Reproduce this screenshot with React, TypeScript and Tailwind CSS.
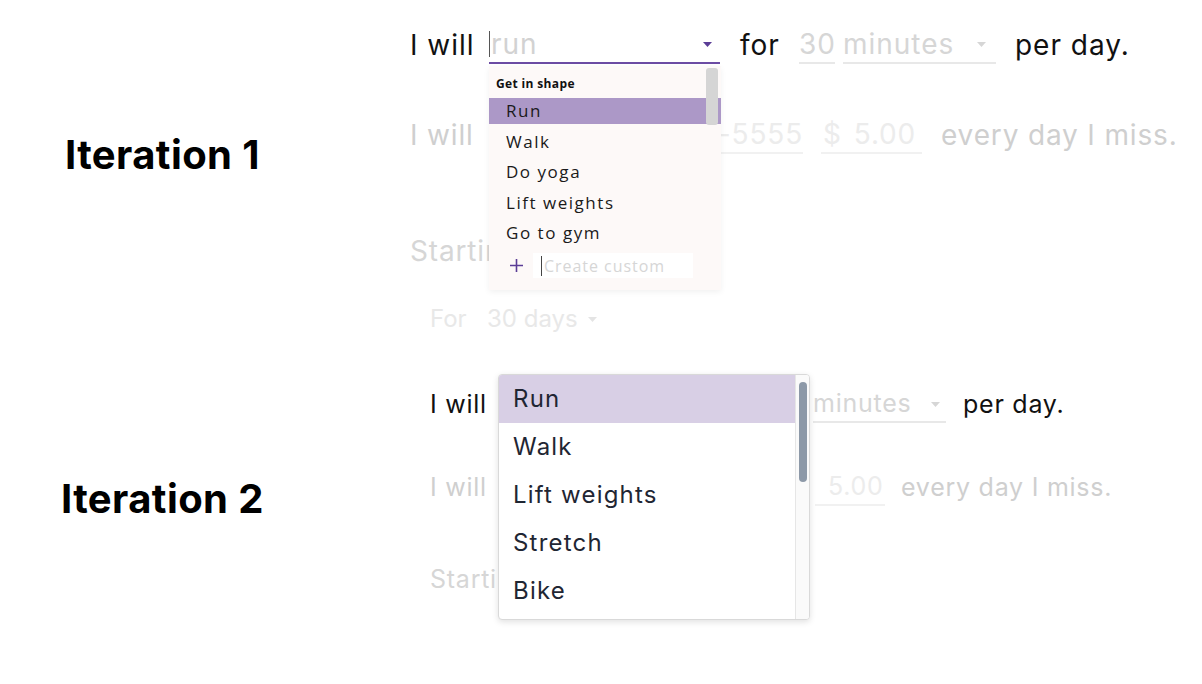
import React from "react";

const sentence = "font-['Inter',sans-serif]";

function Caret({ color, className = "" }: { color: string; className?: string }) {
  return (
    <svg width="9" height="5" viewBox="0 0 9 5" className={className}>
      <path d="M0 0 L9 0 L4.5 5 Z" fill={color} />
    </svg>
  );
}

function Iteration1() {
  const items = ["Run", "Walk", "Do yoga", "Lift weights", "Go to gym"];
  return (
    <section className="flex h-[355px]">
      <div className="w-[410px] pl-[65px] pt-[131px]">
        <h2 className="font-['Inter',sans-serif] font-bold text-[40px] leading-[48px] tracking-[0.01em] text-black">
          Iteration 1
        </h2>
      </div>

      <div className={`relative flex-1 ${sentence}`}>
        {/* sentence 1 */}
        <div className="mt-[26px] flex items-center h-[38px] text-[28px] text-[#111] tracking-[0.035em]">
          <span className="w-[79px]">I will</span>
          <div className="w-[231px] h-full flex items-center border-b-2 border-[#6c4ca4]">
            <span className="w-px h-[26px] bg-[#555] mr-px" />
            <span className="flex-1 text-[#d2d2d2]">run</span>
            <Caret color="#5b3d96" className="mr-[8px]" />
          </div>
          <span className="ml-[20px] w-[59px]">for</span>
          <div className="w-[36px] h-full flex items-center border-b-2 border-[#e8e8e8] text-[#d6d6d6]">
            30
          </div>
          <div className="ml-[8px] w-[153px] h-full flex items-center border-b-2 border-[#e8e8e8] text-[#d6d6d6]">
            <span className="flex-1">minutes</span>
            <Caret color="#d6d6d6" className="mr-[10px]" />
          </div>
          <span className="ml-[19px]">per day.</span>
        </div>

        {/* sentence 2 (faded) */}
        <div className="mt-[52px] flex items-center h-[38px] text-[28px] text-[#cfcfcf] tracking-[0.03em]">
          <span className="w-[79px]">I will</span>
          <div className="w-[314px] h-full flex items-center justify-end border-b-2 border-[#f1f1f1] text-[#ececec]">
            (555) 555-5555
          </div>
          <div className="ml-[18px] w-[101px] h-full flex items-center border-b-2 border-[#f1f1f1] text-[#ececec]">
            <span className="ml-[2px]">$</span>
            <span className="ml-[12px]">5.00</span>
          </div>
          <span className="ml-[19px]">every day I miss.</span>
        </div>

        {/* sentence 3 */}
        <div className="mt-[78px] flex items-center h-[38px] text-[28px] text-[#d6d6d6] tracking-[0.03em]">
          <span>Starting</span>
        </div>

        {/* sentence 4 */}
        <div className="mt-[32px] pl-[20px] flex items-center h-[34px] text-[24px] text-[#e8e8e8]">
          <span className="w-[57px]">For</span>
          <span>30 days</span>
          <Caret color="#e4e4e4" className="ml-[10px]" />
        </div>

        {/* open dropdown */}
        <div className="absolute left-[79px] top-[66px] w-[232px] h-[224px] bg-[#fdf9f8] shadow-[0_2px_6px_rgba(0,0,0,0.06)] font-['Open_Sans',sans-serif]">
          <div className="absolute right-[3px] top-[2px] w-[12px] h-[57px] rounded-[3px] bg-[#d5d5d5]" />
          <div className="pl-[7px] pt-[9px] h-[32px] text-[12px] font-bold tracking-[0.03em] text-[#111]">Get in shape</div>
          <ul className="flex flex-col gap-[4.5px]">
            {items.map((it, i) => (
              <li
                key={it}
                className={`h-[26px] pl-[17px] flex items-center text-[17px] tracking-[0.09em] text-[#1a1a1a] ${
                  i === 0 ? "bg-[#ac98c7]" : ""
                }`}
              >
                {it}
              </li>
            ))}
          </ul>
          <div className="mt-[7px] flex items-center h-[25px]">
            <div className="w-[44px] pl-[21px] flex items-center">
              <svg width="13" height="13" viewBox="0 0 13 13">
                <path d="M6.5 0 V13 M0 6.5 H13" stroke="#5b3d96" strokeWidth="1.6" />
              </svg>
            </div>
            <div className="w-[160px] h-[25px] bg-white flex items-center">
              <span className="ml-[8px] w-px h-[20px] bg-[#444]" />
              <span className="ml-[2px] text-[16px] tracking-[0.06em] text-[#d6d6d6]">Create custom</span>
            </div>
          </div>
        </div>
      </div>
    </section>
  );
}

function Iteration2() {
  const items = ["Run", "Walk", "Lift weights", "Stretch", "Bike"];
  return (
    <section className="flex h-[329px]">
      <div className="w-[430px] pl-[61px] pt-[120px]">
        <h2 className="font-['Inter',sans-serif] font-bold text-[40px] leading-[48px] tracking-[0.01em] text-black">
          Iteration 2
        </h2>
      </div>

      <div className={`relative flex-1 ${sentence}`}>
        <div className="mt-[32px] flex items-center h-[36px] text-[25px] text-[#111] tracking-[0.03em]">
          <span className="w-[68px]">I will</span>
          <div className="w-[315px] h-full" />
          <div className="w-[133px] h-full flex items-center border-b-2 border-[#e8e8e8] text-[#d6d6d6]">
            <span className="flex-1">minutes</span>
            <Caret color="#d6d6d6" className="mr-[6px]" />
          </div>
          <span className="ml-[17px]">per day.</span>
        </div>

        <div className="mt-[47px] flex items-center h-[36px] text-[25px] text-[#cfcfcf] tracking-[0.03em]">
          <span className="w-[68px]">I will</span>
          <div className="w-[317px] h-full" />
          <div className="w-[70px] h-full flex items-center border-b-2 border-[#f1f1f1] text-[#ececec]">
            <span className="ml-[13px]">5.00</span>
          </div>
          <span className="ml-[16px]">every day I miss.</span>
        </div>

        <div className="mt-[56px] flex items-center h-[36px] text-[25px] text-[#d6d6d6] tracking-[0.03em]">
          <span>Starting</span>
        </div>

        {/* open dropdown */}
        <div className="absolute left-[68px] top-[19px] w-[312px] h-[246px] bg-white border border-[#d9d9d9] rounded-[4px] shadow-[0_2px_6px_rgba(0,0,0,0.12)] overflow-hidden flex">
          <ul className="flex-1 flex flex-col">
            {items.map((it, i) => (
              <li
                key={it}
                className={`h-[48px] pl-[14px] flex items-center text-[24px] tracking-[0.05em] text-[#1f2633] ${
                  i === 0 ? "bg-[#d8cfe5]" : ""
                }`}
              >
                {it}
              </li>
            ))}
          </ul>
          <div className="w-[14px] border-l border-[#e6e6e6] bg-[#fafafa] pt-[7px] flex justify-center">
            <div className="w-[8px] h-[100px] rounded-full bg-[#8d99a8]" />
          </div>
        </div>
      </div>
    </section>
  );
}

export default function App() {
  return (
    <div className="w-[1202px] h-[684px] bg-white overflow-hidden">
      <Iteration1 />
      <Iteration2 />
    </div>
  );
}
